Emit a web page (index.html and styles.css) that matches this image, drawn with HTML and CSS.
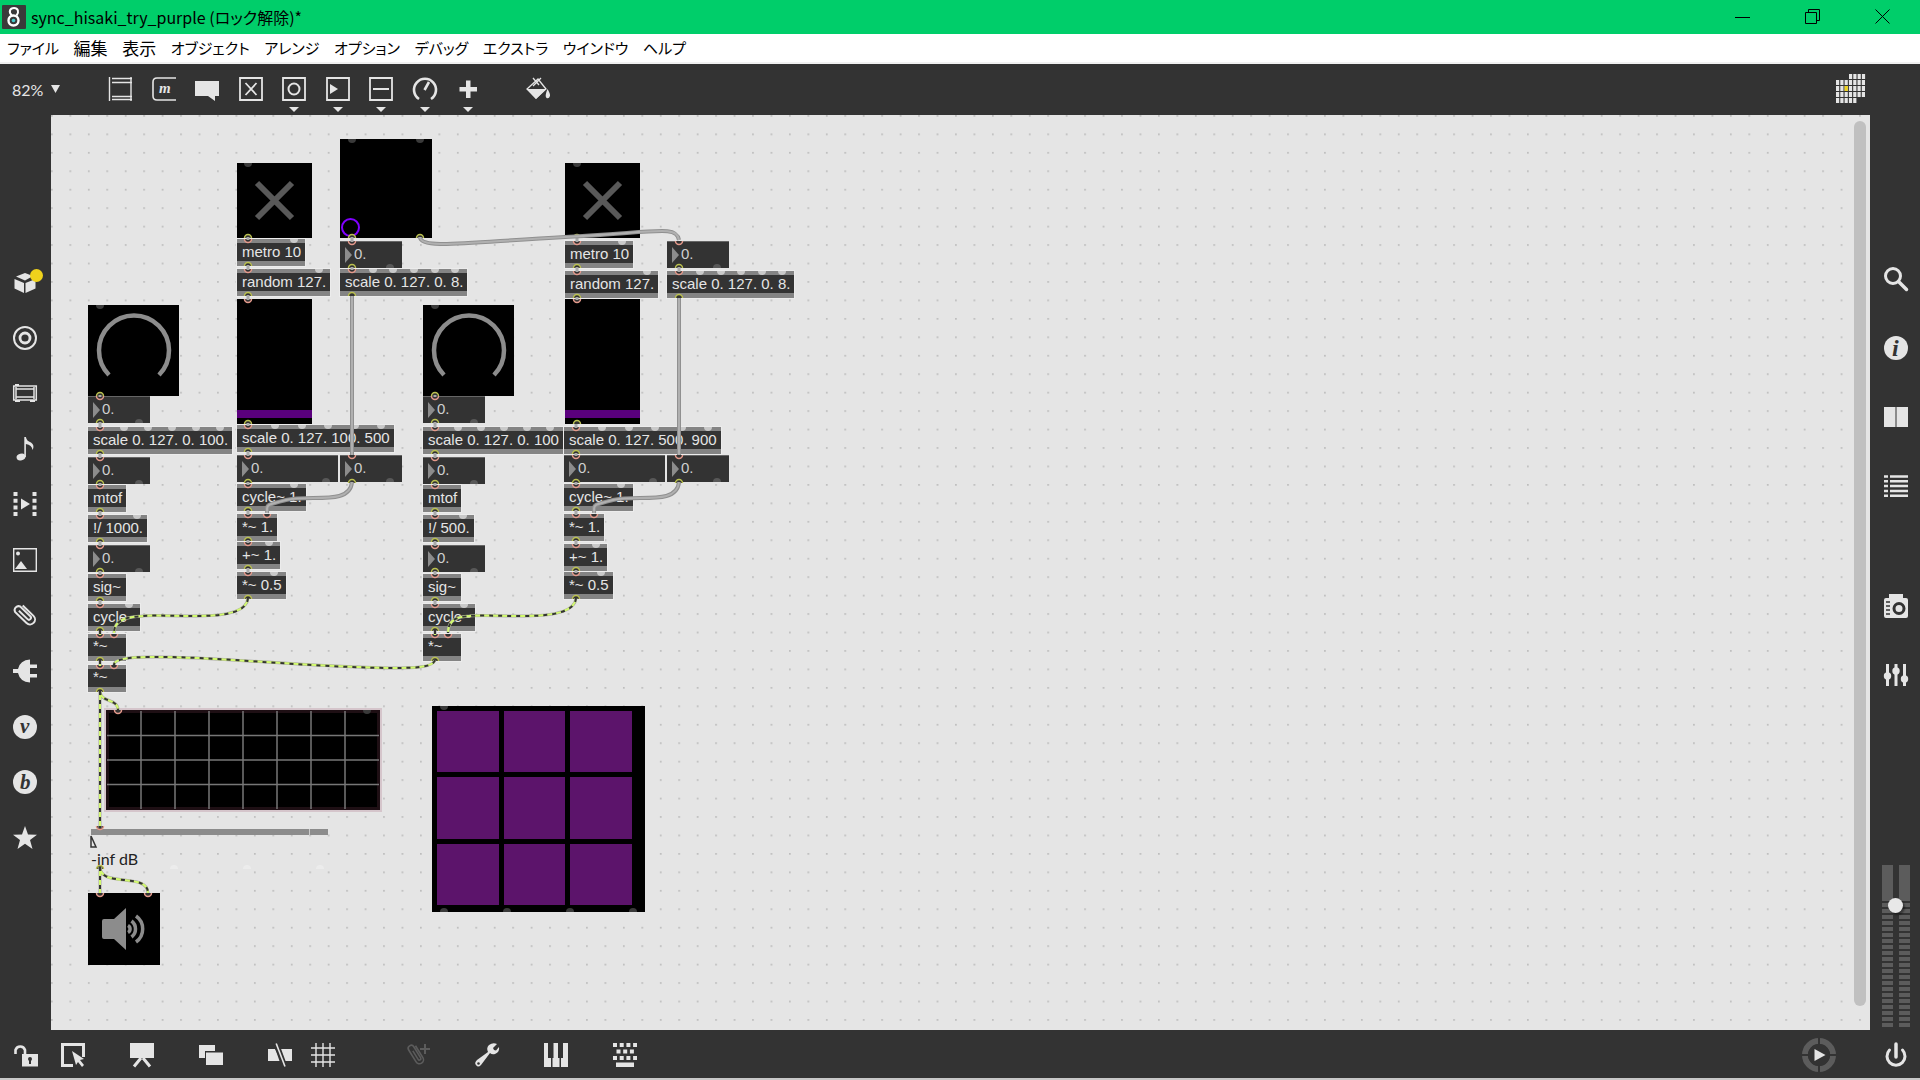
FILE: index.html
```html
<!DOCTYPE html>
<html lang="ja">
<head>
    <meta charset="UTF-8">
    <meta name="viewport" content="width=device-width, initial-scale=1.0">
    <title>sync_hisaki_try_purple</title>
    <link rel="stylesheet" href="styles.css">
</head>
<body>
    <!-- Title bar -->
    <header class="title-bar">
        <svg class="app-icon" viewBox="0 0 24 24"><rect width="24" height="24" rx="1" fill="#3a3a3a"/><circle cx="11.500" cy="15.500" r="5" fill="none" stroke="#fff" stroke-width="2.4"/><path d="M10 10.500C6 7 8 3 12 3C16 3 17.500 7 14.500 10.500" fill="none" stroke="#fff" stroke-width="2"/><circle cx="11.500" cy="15.500" r="1.800" fill="#4cc"/></svg>
        <h1 class="title">sync_hisaki_try_purple (ロック解除)*</h1>
        <div class="window-buttons">
            <button aria-label="Minimize"><svg viewBox="0 0 16 16"><path d="M0 8.500H15"/></svg></button>
            <button aria-label="Restore"><svg viewBox="0 0 16 16"><path d="M.5 3.500h11v11H.5zM3.500 3.500v-3h11v11h-3"/></svg></button>
            <button aria-label="Close"><svg viewBox="0 0 16 16"><path d="M.5 .5l14 14M14.500 .5l-14 14"/></svg></button>
        </div>
    </header>

    <nav class="menu-bar">
        <div class="menu-items">
            <button>ファイル</button>
            <button class="kanji">編集</button>
            <button class="kanji">表示</button>
            <button>オブジェクト</button>
            <button>アレンジ</button>
            <button>オプション</button>
            <button>デバッグ</button>
            <button>エクストラ</button>
            <button>ウインドウ</button>
            <button>ヘルプ</button>
        </div>
    </nav>

    <!-- Top toolbar -->
    <div class="toolbar">
        <button class="zoom-level">82% <svg viewBox="0 0 10 8"><path d="M0 0h9L4.500 8z"/></svg></button>
        <div class="tool-group">
            <button class="tool" aria-label="Object"><svg viewBox="0 0 24 24"><path d="M1.500 0V24M4 1.500H24M4 5.500H24M4 19.500H24M4 22.500H24M23 0V24" fill="none" stroke="currentColor" stroke-width="1.400"/></svg></button>
            <button class="tool" aria-label="Message"><svg viewBox="0 0 24 24"><path d="M24 1H5Q1 1 1 5V19Q1 23 5 23H24" fill="none" stroke="currentColor" stroke-width="1.600"/><text x="7" y="16" class="icon-letter" font-size="15">m</text></svg></button>
            <button class="tool" aria-label="Comment"><svg viewBox="0 0 24 24"><path d="M0 4H24V19H20V24L13 19H0z"/></svg></button>
            <button class="tool" aria-label="Toggle"><svg viewBox="0 0 24 24"><path d="M1 1H23V23H1zM6.500 6L17.500 18M17.500 6L6.500 18" fill="none" stroke="currentColor" stroke-width="1.800"/></svg></button>
            <button class="tool drop" aria-label="Button"><svg viewBox="0 0 24 24"><path d="M1 1H23V23H1z" fill="none" stroke="currentColor" stroke-width="1.800"/><circle cx="12" cy="12" r="5.500" fill="none" stroke="currentColor" stroke-width="2"/></svg></button>
            <button class="tool drop" aria-label="Number"><svg viewBox="0 0 24 24"><path d="M1 1H23V23H1z" fill="none" stroke="currentColor" stroke-width="1.800"/><path d="M4 7L12 12L4 17z"/></svg></button>
            <button class="tool drop" aria-label="Slider"><svg viewBox="0 0 24 24"><path d="M1 1H23V23H1zM4 12H20" fill="none" stroke="currentColor" stroke-width="1.800"/></svg></button>
            <button class="tool drop" aria-label="Dial"><svg viewBox="0 0 24 24"><path d="M6 22A11 11 0 1 1 18 22M11.500 13L16 5" fill="none" stroke="currentColor" stroke-width="2.600"/></svg></button>
            <button class="tool drop" aria-label="Add"><svg viewBox="0 0 24 24"><path d="M10 3.500h4.500V10H21v4.500h-6.500V21H10v-6.500H3.500V10H10z"/></svg></button>
        </div>
        <button class="tool paint" aria-label="Format"><svg viewBox="0 0 24 24"><path d="M12 2L20 12L10 21L1 12zM7 1L13 8M15 1L7 9" fill="none" stroke="currentColor" stroke-width="1.300"/><path d="M1 12H20L10 22z"/><path d="M21.500 12Q24.500 17 24 19Q23 22 20.500 21Q18.500 19 21.500 12"/></svg></button>
        <button class="tool-grid" aria-label="Toolbar options"><svg viewBox="0 0 30 30"><path d="M13 2.500H30M0 8.500H30M0 14.500H30M0 20.500H30M0 26.500H21" fill="none" stroke="#e5e5e5" stroke-width="5" stroke-dasharray="3.200 1.100"/><path d="M8.600 14.500h3.200" stroke="#efd21c" stroke-width="5"/></svg></button>
    </div>

    <main class="workspace">
        <!-- Left browser bar -->
        <aside class="side-left">
            <button class="icon" aria-label="Packages"><svg viewBox="0 0 24 24"><path d="M12 3L20 6L12 10.500L3 6.500zM1.500 9L11 13V23L1.500 18.500zM22.500 9L12.500 13V23L22.500 18.500z"/></svg><span class="badge"></span></button>
            <button class="icon" aria-label="Objects"><svg viewBox="0 0 24 24" fill="none" stroke="currentColor" stroke-width="2"><circle cx="12" cy="12" r="11"/><circle cx="12" cy="12" r="5" stroke-width="2.800"/></svg></button>
            <button class="icon" aria-label="Devices"><svg viewBox="0 0 24 24"><path d="M.7 5H23.300V19H.7zM2.500 8H21.500M2.500 16H21.500M3 6V18M21 6V18" fill="none" stroke="currentColor" stroke-width="1.500"/><path d="M2 3h4v2H2zM2 19h5v2H2zM17 19h5v2h-5z"/></svg></button>
            <button class="icon" aria-label="Audio"><svg viewBox="0 0 24 24"><ellipse cx="8" cy="20" rx="4.500" ry="3.400" transform="rotate(-15 8 20)"/><path d="M11.300 0h1.600Q13.500 4 18 5.500Q22 8 19.500 13Q19 8 12.900 7V20h-1.600z"/></svg></button>
            <button class="icon" aria-label="Video"><svg viewBox="0 0 24 24"><path d="M2.500 0V24M21.500 0V24" stroke="currentColor" stroke-width="4" stroke-dasharray="4 2.700"/><path d="M8 6.500L17 12L8 17.500z"/></svg></button>
            <button class="icon" aria-label="Images"><svg viewBox="0 0 24 24"><path d="M.7 .7H23.300V23.300H.7z" fill="none" stroke="currentColor" stroke-width="1.400"/><circle cx="5" cy="5.500" r="2"/><path d="M2 21L8 13L14 21z"/></svg></button>
            <button class="icon" aria-label="Snippets"><svg viewBox="0 0 24 24"><path d="M18 3V18A5 5 0 0 1 8 18V2A4 4 0 0 1 15.500 2V16A2 2 0 0 1 11.500 16V4" transform="rotate(-46 12 12)" fill="none" stroke="currentColor" stroke-width="2"/></svg></button>
            <button class="icon" aria-label="Plug-ins"><svg viewBox="0 0 24 24"><path d="M0 10H5Q7 1 17 .5V5.500H24V9H17V15H24V18.500H17V23.500Q7 23 5 14H0z"/></svg></button>
            <button class="icon" aria-label="Vizzie"><svg viewBox="0 0 24 24"><circle cx="12" cy="12" r="12"/><text x="7" y="18" class="icon-letter dark" font-size="21">v</text></svg></button>
            <button class="icon" aria-label="Beap"><svg viewBox="0 0 24 24"><circle cx="12" cy="12" r="12"/><text x="7" y="19" class="icon-letter dark" font-size="21">b</text></svg></button>
            <button class="icon" aria-label="Favorites"><svg viewBox="0 0 24 24"><path d="M12 0L15 8.500L24 8.700L17 14L19.500 23L12 17.800L4.500 23L7 14L0 8.700L9 8.500z"/></svg></button>
        </aside>

        <!-- Patcher canvas -->
        <section class="canvas">
            <svg class="dots">
                <defs>
                    <pattern id="dot-grid" width="15" height="15" patternUnits="userSpaceOnUse" patternTransform="scale(1.23)">
                        <rect width="1.4" height="1.4" fill="#bdbdbd"/>
                    </pattern>
                </defs>
                <rect width="100%" height="100%" fill="url(#dot-grid)"/>
            </svg>

            <div class="chain chain-a">
                <label class="dial n1"><svg viewBox="0 0 91 91"><path d="M21 70A35 35 0 1 1 71 70"/></svg><input type="range" value="0" max="127" aria-label="Dial 1"></label>
                <label class="number n2"><input type="text" value="0." aria-label="Dial value"></label>
                <div class="object n3">scale 0. 127. 0. 100.</div>
                <label class="number n4"><input type="text" value="0." aria-label="Scaled value"></label>
                <div class="object n5">mtof</div>
                <div class="object n6">!/ 1000.</div>
                <label class="number n7"><input type="text" value="0." aria-label="Divided value"></label>
                <div class="object n8">sig~</div>
                <div class="object n9">cycle~</div>
                <div class="object signal n10">*~</div>
                <div class="object signal n11">*~</div>
            </div>

            <div class="chain chain-d">
                <label class="dial n1"><svg viewBox="0 0 91 91"><path d="M21 70A35 35 0 1 1 71 70"/></svg><input type="range" value="0" max="127" aria-label="Dial 2"></label>
                <label class="number n2"><input type="text" value="0." aria-label="Dial value"></label>
                <div class="object n3">scale 0. 127. 0. 100</div>
                <label class="number n4"><input type="text" value="0." aria-label="Scaled value"></label>
                <div class="object n5">mtof</div>
                <div class="object n6">!/ 500.</div>
                <label class="number n7"><input type="text" value="0." aria-label="Divided value"></label>
                <div class="object n8">sig~</div>
                <div class="object n9">cycle~</div>
                <div class="object signal n10">*~</div>
            </div>

            <div class="chain chain-b">
                <label class="toggle n1"><input type="checkbox" aria-label="Metro 1"><svg viewBox="0 0 75 75"><path d="M20 20L55 55M55 20L20 55"/></svg></label>
                <div class="object n2">metro 10</div>
                <div class="object n3">random 127.</div>
                <label class="multislider n4"><input type="range" value="0" max="127" aria-label="Random 1"></label>
                <div class="object n5">scale 0. 127. 100. 500</div>
                <label class="number wide n6"><input type="text" value="0." aria-label="Frequency"></label>
                <div class="object n7">cycle~ 1.</div>
                <div class="object n8">*~ 1.</div>
                <div class="object n9">+~ 1.</div>
                <div class="object n10">*~ 0.5</div>
            </div>

            <div class="chain chain-c">
                <label class="xy-pad n1"><input type="range" value="0" max="127" aria-label="XY pad"></label>
                <label class="number n2"><input type="text" value="0." aria-label="X value"></label>
                <div class="object n3">scale 0. 127. 0. 8.</div>
                <label class="number n4"><input type="text" value="0." aria-label="Scaled X"></label>
            </div>

            <div class="chain chain-e-top">
                <label class="toggle n1"><input type="checkbox" aria-label="Metro 2"><svg viewBox="0 0 75 75"><path d="M20 20L55 55M55 20L20 55"/></svg></label>
                <div class="object n2">metro 10</div>
                <div class="object n3">random 127.</div>
                <label class="multislider n4"><input type="range" value="0" max="127" aria-label="Random 2"></label>
            </div>

            <div class="chain chain-e">
                <div class="object n5">scale 0. 127. 500. 900</div>
                <label class="number wide n6"><input type="text" value="0." aria-label="Frequency"></label>
                <div class="object n7">cycle~ 1.</div>
                <div class="object n8">*~ 1.</div>
                <div class="object n9">+~ 1.</div>
                <div class="object n10">*~ 0.5</div>
            </div>

            <div class="chain chain-f">
                <label class="number n2"><input type="text" value="0." aria-label="Y value"></label>
                <div class="object n3">scale 0. 127. 0. 8.</div>
                <label class="number n4"><input type="text" value="0." aria-label="Scaled Y"></label>
            </div>

            <!-- Scope, gain, output and pads -->
            <div class="scope"><svg viewBox="0 0 272 98" preserveAspectRatio="none"><path d="M34 0V98M68 0V98M102 0V98M136 0V98M170 0V98M204 0V98M238 0V98M0 24.500H272M0 49H272M0 73.500H272"/></svg></div>
            <label class="gain">
                <span class="gain-bar"></span>
                <input type="range" value="0" aria-label="Gain">
                <svg class="gain-handle" viewBox="0 0 8 13"><path d="M1 1L6 12H1z"/></svg>
                <span class="gain-text">-inf dB</span>
            </label>
            <button class="dac" aria-label="Audio on/off"><svg viewBox="0 0 44 42"><path d="M0 13Q0 11 2 11H12L24 0V42L12 31H2Q0 31 0 29z" fill="#8c8c8c"/><path d="M26 17.500A4 4 0 0 1 26 24.500M29.500 13A10 10 0 0 1 29.500 29M34 8A16 16 0 0 1 34 34" fill="none" stroke="#8c8c8c" stroke-width="3.500"/></svg></button>
            <div class="pads">
                <button aria-label="Pad 1"></button><button aria-label="Pad 2"></button><button aria-label="Pad 3"></button>
                <button aria-label="Pad 4"></button><button aria-label="Pad 5"></button><button aria-label="Pad 6"></button>
                <button aria-label="Pad 7"></button><button aria-label="Pad 8"></button><button aria-label="Pad 9"></button>
            </div>

            <!-- Ports and patch cords -->
            <svg class="cords">
                <defs>
                    <path id="top" d="M-4 0A4 4 0 0 0 4 0z"/>
                    <path id="bot" d="M-4 0A4 4 0 0 1 4 0z"/>
                    <path id="in" d="M-3.500 0A3.500 3.500 0 0 0 3.500 0" fill="#333" stroke="#e59a8c" stroke-width="1.500"/>
                    <path id="out" d="M-3.500 0A3.500 3.500 0 0 1 3.500 0" fill="#333" stroke="#bcc250" stroke-width="1.500"/>
                    <g id="signal-cords">
                        <path d="M100 630V635M100 660V666M435 630V635M100 691V828M100 867V893"/>
                        <path d="M248 598C247 612 226 616 198 616S150 615 143 616S114 616 114 633"/>
                        <path d="M576 598C575 612 553 616 525 616S477 615 470 616S448 616 448 633"/>
                        <path d="M435 660C433 668 412 668 390 668C300 667 215 656 150 657C130 657 114 659 114 665"/>
                        <path d="M100 691C100 703 118 698 118 710"/>
                        <path d="M100 867C100 888 148 872 148 893"/>
                    </g>
                    <g id="control-cords">
                        <path d="M420 237C420 250 470 242 565 237S676 225 679 240"/>
                        <path d="M352 296V455M679 298V455"/>
                        <path d="M352 482C350 506 310 494 286 500S268 505 267 513"/>
                        <path d="M679 482C677 506 637 494 613 500S595 505 594 513"/>
                    </g>
                </defs>
                <g transform="translate(-51 -115)">
                    <g fill="#c9c9c9">
                        <use href="#top" x="294" y="239"/><use href="#top" x="319" y="269"/>
                        <use href="#top" x="373" y="269"/><use href="#top" x="393" y="269"/><use href="#top" x="414" y="269"/><use href="#top" x="435" y="269"/><use href="#top" x="455" y="269"/>
                        <use href="#top" x="124" y="427"/><use href="#top" x="148" y="427"/><use href="#top" x="172" y="427"/><use href="#top" x="196" y="427"/><use href="#top" x="220" y="427"/>
                        <use href="#top" x="275" y="425"/><use href="#top" x="302" y="425"/><use href="#top" x="328" y="425"/><use href="#top" x="355" y="425"/><use href="#top" x="381" y="425"/>
                        <use href="#top" x="294" y="484"/><use href="#top" x="137" y="515"/><use href="#top" x="269" y="542"/><use href="#top" x="274" y="572"/><use href="#top" x="129" y="604"/>
                        <use href="#top" x="622" y="241"/><use href="#top" x="647" y="271"/>
                        <use href="#top" x="700" y="271"/><use href="#top" x="721" y="271"/><use href="#top" x="741" y="271"/><use href="#top" x="762" y="271"/><use href="#top" x="782" y="271"/>
                        <use href="#top" x="458" y="427"/><use href="#top" x="481" y="427"/><use href="#top" x="504" y="427"/><use href="#top" x="527" y="427"/><use href="#top" x="550" y="427"/>
                        <use href="#top" x="602" y="427"/><use href="#top" x="629" y="427"/><use href="#top" x="655" y="427"/><use href="#top" x="682" y="427"/><use href="#top" x="708" y="427"/>
                        <use href="#top" x="621" y="484"/><use href="#top" x="596" y="544"/><use href="#top" x="601" y="572"/><use href="#top" x="463" y="515"/><use href="#top" x="464" y="604"/>
                    </g>
                    <g fill="#3a3a3a">
                        <use href="#top" x="248" y="163"/><use href="#top" x="577" y="163"/><use href="#top" x="100" y="305"/><use href="#top" x="435" y="305"/>
                        <use href="#top" x="352" y="139"/><use href="#top" x="420" y="139"/><use href="#top" x="367" y="710"/><use href="#top" x="444" y="706"/>
                        <use href="#bot" x="444" y="912"/><use href="#bot" x="507" y="912"/><use href="#bot" x="570" y="912"/><use href="#bot" x="633" y="912"/>
                    </g>
                    <g fill="#585858">
                        <use href="#bot" x="139" y="423"/><use href="#bot" x="139" y="484"/><use href="#bot" x="139" y="572"/>
                        <use href="#bot" x="474" y="423"/><use href="#bot" x="474" y="484"/><use href="#bot" x="474" y="572"/>
                        <use href="#bot" x="326" y="482"/><use href="#bot" x="653" y="482"/><use href="#bot" x="390" y="482"/><use href="#bot" x="390" y="268"/><use href="#bot" x="717" y="482"/><use href="#bot" x="717" y="268"/>
                    </g>
                    <g fill="#ececec"><use href="#bot" x="174" y="869"/><use href="#bot" x="247" y="869"/><use href="#bot" x="320" y="869"/></g>

                    <use href="#in" x="100" y="396"/><use href="#in" x="100" y="427"/><use href="#in" x="100" y="457"/><use href="#in" x="100" y="485"/><use href="#in" x="100" y="515"/><use href="#in" x="100" y="545"/><use href="#in" x="100" y="574"/><use href="#in" x="100" y="604"/><use href="#in" x="100" y="634"/><use href="#in" x="100" y="665"/>
                    <use href="#out" x="100" y="396"/><use href="#out" x="100" y="423"/><use href="#out" x="100" y="454"/><use href="#out" x="100" y="484"/><use href="#out" x="100" y="512"/><use href="#out" x="100" y="542"/><use href="#out" x="100" y="572"/><use href="#out" x="100" y="601"/><use href="#out" x="100" y="631"/><use href="#out" x="100" y="661"/><use href="#out" x="100" y="692"/>
                    <use href="#in" x="435" y="396"/><use href="#in" x="435" y="427"/><use href="#in" x="435" y="457"/><use href="#in" x="435" y="485"/><use href="#in" x="435" y="515"/><use href="#in" x="435" y="545"/><use href="#in" x="435" y="574"/><use href="#in" x="435" y="604"/><use href="#in" x="435" y="634"/>
                    <use href="#out" x="435" y="396"/><use href="#out" x="435" y="423"/><use href="#out" x="435" y="454"/><use href="#out" x="435" y="484"/><use href="#out" x="435" y="512"/><use href="#out" x="435" y="542"/><use href="#out" x="435" y="572"/><use href="#out" x="435" y="601"/><use href="#out" x="435" y="631"/><use href="#out" x="435" y="661"/>
                    <use href="#in" x="248" y="239"/><use href="#in" x="248" y="269"/><use href="#in" x="248" y="299"/><use href="#in" x="248" y="425"/><use href="#in" x="248" y="455"/><use href="#in" x="248" y="484"/><use href="#in" x="248" y="514"/><use href="#in" x="248" y="542"/><use href="#in" x="248" y="572"/>
                    <use href="#out" x="248" y="238"/><use href="#out" x="248" y="266"/><use href="#out" x="248" y="296"/><use href="#out" x="248" y="424"/><use href="#out" x="248" y="452"/><use href="#out" x="248" y="483"/><use href="#out" x="248" y="511"/><use href="#out" x="248" y="541"/><use href="#out" x="248" y="569"/><use href="#out" x="248" y="599"/>
                    <use href="#in" x="577" y="241"/><use href="#in" x="577" y="271"/><use href="#in" x="577" y="299"/><use href="#in" x="576" y="427"/><use href="#in" x="576" y="455"/><use href="#in" x="576" y="484"/><use href="#in" x="576" y="514"/><use href="#in" x="576" y="544"/><use href="#in" x="576" y="572"/>
                    <use href="#out" x="577" y="238"/><use href="#out" x="577" y="268"/><use href="#out" x="577" y="298"/><use href="#out" x="577" y="424"/><use href="#out" x="576" y="454"/><use href="#out" x="576" y="483"/><use href="#out" x="576" y="511"/><use href="#out" x="576" y="541"/><use href="#out" x="576" y="571"/><use href="#out" x="576" y="599"/>
                    <use href="#in" x="352" y="241"/><use href="#in" x="352" y="269"/><use href="#in" x="352" y="455"/><use href="#in" x="679" y="241"/><use href="#in" x="679" y="271"/><use href="#in" x="679" y="455"/>
                    <use href="#out" x="352" y="238"/><use href="#out" x="352" y="268"/><use href="#out" x="352" y="296"/><use href="#out" x="352" y="483"/><use href="#out" x="420" y="238"/><use href="#out" x="679" y="268"/><use href="#out" x="679" y="298"/><use href="#out" x="679" y="483"/>
                    <use href="#in" x="267" y="514"/><use href="#in" x="594" y="514"/><use href="#in" x="114" y="634"/><use href="#in" x="448" y="634"/><use href="#in" x="114" y="665"/><use href="#in" x="118" y="710"/><use href="#in" x="100" y="826"/><use href="#in" x="100" y="893"/><use href="#in" x="148" y="893"/>
                    <use href="#out" x="100" y="869"/>

                    <path class="links" d="M100 395v2M100 422v6M100 453v5M100 483v3M100 511v5M100 541v5M100 571v4M100 600v5M435 395v2M435 422v6M435 453v5M435 483v3M435 511v5M435 541v5M435 571v4M435 600v5M248 237v3M248 265v5M248 295v5M248 423v3M248 451v5M248 482v3M248 510v5M248 540v3M248 568v5M577 237v5M577 267v5M577 297v3M576 424v4M576 453v3M576 482v3M576 510v5M576 540v5M576 570v3M352 237v5M352 267v3M679 267v5"/>
                    <use href="#control-cords" class="cord-edge"/>
                    <use href="#control-cords" class="cord-fill"/>
                    <use href="#signal-cords" class="cord-edge thin"/>
                    <use href="#signal-cords" class="cord-signal"/>
                    <use href="#signal-cords" class="cord-dash"/>
                </g>
            </svg>
            <div class="scrollbar"></div>
        </section>

        <!-- Right inspector bar -->
        <aside class="side-right">
            <div class="icon-stack">
                <button class="icon" aria-label="Search"><svg viewBox="0 0 24 24" fill="none" stroke="currentColor"><circle cx="9" cy="9" r="7.500" stroke-width="3"/><path d="M14.500 14.500L22.500 22.500" stroke-width="3.500" stroke-linecap="round"/></svg></button>
                <button class="icon" aria-label="Inspector"><svg viewBox="0 0 24 24"><circle cx="12" cy="12" r="12"/><text x="8" y="20" class="icon-letter dark" font-size="24">i</text></svg></button>
                <button class="icon" aria-label="Reference"><svg viewBox="0 0 24 24"><path d="M0 2H11V22H0zM13 2H24V22H13z"/><path d="M11 2h2v20h-2z" opacity=".5"/></svg></button>
                <button class="icon" aria-label="Console"><svg viewBox="0 0 24 24"><path d="M0 2.500H4M6 2.500H24M0 7.300H4M6 7.300H24M0 12.100H4M6 12.100H24M0 16.900H4M6 16.900H24M0 21.700H4M6 21.700H24" stroke="currentColor" stroke-width="2.500"/></svg></button>
            </div>
            <div class="icon-stack">
                <button class="icon" aria-label="Snapshots"><svg viewBox="0 0 24 24"><path d="M5 0H19V4H22Q24 4 24 6V22Q24 24 22 24H2Q0 24 0 22V6Q0 4 2 4H5z"/><circle cx="15" cy="14.500" r="5" fill="none" stroke="#333" stroke-width="3"/><path d="M2 8H6M2 12H6M2 16H6M2 20H6" stroke="#333" stroke-width="1.600"/></svg></button>
                <button class="icon" aria-label="Mixer"><svg viewBox="0 0 24 24"><path d="M2 1h3v22H2zM10.500 1h3v22h-3zM19 1h3v22h-3z"/><circle cx="3.500" cy="13" r="3.700"/><circle cx="12" cy="8" r="3.700"/><circle cx="20.500" cy="16" r="3.700"/></svg></button>
            </div>
            <label class="volume">
                <span class="meter"></span><span class="meter"></span><span class="knob"></span>
                <input type="range" value="75" aria-label="Volume">
            </label>
        </aside>
    </main>

    <!-- Bottom toolbar -->
    <footer class="bottom-bar">
        <div class="lock-group">
            <button class="icon" aria-label="Unlock"><svg viewBox="0 0 24 24"><path d="M8 11H24V23.500H8z"/><path d="M1.500 11V7A5 5 0 0 1 11 7V11" fill="none" stroke="currentColor" stroke-width="2.600"/><circle cx="16" cy="16" r="2" fill="#333"/><path d="M15 16h2v5h-2z" fill="#333"/></svg></button>
            <button class="icon" aria-label="Operate while unlocked"><svg viewBox="0 0 24 24"><path d="M22.500 14V1.500H1.500V22.500H12" fill="none" stroke="currentColor" stroke-width="3"/><path d="M11 8L23 16L19 17L23 22L21 24L17 19L15 22z"/></svg></button>
        </div>
        <button class="icon" aria-label="Presentation"><svg viewBox="0 0 24 24"><path d="M0 0H24V15H0z"/><path d="M11 15L4 23.500M13 15L20 23.500" stroke="currentColor" stroke-width="3"/></svg></button>
        <button class="icon" aria-label="Bring to front"><svg viewBox="0 0 24 24"><path d="M0 2H16V8H6V15H0z"/><path d="M7 9.500H24V22H7z"/></svg></button>
        <div class="snap-group">
            <button class="icon" aria-label="Disable cords"><svg viewBox="0 0 24 24"><path d="M0 6H7L13 18H0zM11 6H24V18H17z"/><path d="M7 .5L15 23.500M9.500 .5L18 23.500" stroke="#333" stroke-width="3"/><path d="M8.200 .5L17 23.500" stroke="currentColor" stroke-width="1.600"/></svg></button>
            <button class="icon" aria-label="Grid"><svg viewBox="0 0 24 24"><path d="M5 0V24M12 0V24M19 0V24M0 5H24M0 12H24M0 19H24" stroke="currentColor" stroke-width="1.400"/></svg></button>
        </div>
        <button class="icon add-snippet" aria-label="Add snippet"><svg viewBox="0 0 24 24"><path d="M15 4V18A4 4 0 0 1 7 18V4A3 3 0 0 1 13 4V17A1.500 1.500 0 0 1 10 17V7" transform="rotate(-32 10 13)" fill="none" stroke="currentColor" stroke-width="1.600"/><path d="M19 1V11M14 6H24" stroke="currentColor" stroke-width="2"/></svg></button>
        <button class="icon" aria-label="Debug"><svg viewBox="0 0 24 24"><path d="M22 1L18 5L19 7L21 7.500L24 4Q25 9 20 11Q17 12 15 10L6 22Q3 25 1 22Q-1 20 2 17L13 9Q11 5 14 2Q18-1 22 1z"/><circle cx="3.500" cy="20.500" r="1.300" fill="#333"/></svg></button>
        <button class="icon" aria-label="MIDI"><svg viewBox="0 0 24 24"><path d="M0 0H4V15H7V24H0zM8.500 24V15H9.500V0H14V15H15.500V24zM17 24V15H19V0H24V24z"/></svg></button>
        <button class="icon" aria-label="Key commands"><svg viewBox="0 0 24 24"><path d="M0 2H24M0 15H24" stroke="currentColor" stroke-width="4" stroke-dasharray="4 2.700"/><path d="M3.500 8.500H21" stroke="currentColor" stroke-width="4" stroke-dasharray="4 2.700"/><path d="M3 19.500H21V24H3z"/></svg></button>
        <div class="transport">
            <button class="play" aria-label="Play"><svg viewBox="0 0 34 34"><circle cx="17" cy="17" r="14" fill="none" stroke="#5c5c5c" stroke-width="6"/><path d="M17 0V34M0 17H34" stroke="#333" stroke-width="2"/><circle cx="17" cy="17" r="11" fill="#333"/><path d="M12.500 11L23.500 17L12.500 23z"/></svg></button>
            <button class="icon" aria-label="Audio power"><svg viewBox="0 0 24 24" fill="none" stroke="currentColor" stroke-width="3" stroke-linecap="round"><path d="M5.500 7A9 9 0 1 0 18.500 7"/><path d="M12 1V14" stroke-width="3.500"/></svg></button>
        </div>
    </footer>
</body>
</html>
```

FILE: styles.css
```css
/* General Styles */
* {
    box-sizing: border-box;
}

body {
    margin: 0;
    height: 100vh;
    display: flex;
    flex-direction: column;
    overflow: hidden;
    background: #333;
    color: #e5e5e5;
    font-family: "Lato", "Noto Sans CJK JP", sans-serif;
}

button {
    padding: 0;
    border: none;
    background: none;
    color: inherit;
    font: inherit;
    cursor: pointer;
}

svg {
    display: block;
    fill: currentColor;
    overflow: visible;
}

svg[fill="none"] {
    fill: none;
}

label input[type="range"] {
    position: absolute;
    inset: 0;
    width: 100%;
    height: 100%;
    margin: 0;
    opacity: 0;
}

/* Title bar */
.title-bar {
    display: flex;
    align-items: center;
    flex: 0 0 34px;
    padding: 0 2px;
    background: #00ce6a;
    color: #000;
}

.app-icon {
    width: 24px;
    height: 24px;
    margin-right: 5px;
}

.title {
    margin: 0;
    font: 400 16px/24px "Noto Sans CJK JP", sans-serif;
    font-feature-settings: "palt";
}

.window-buttons {
    display: flex;
    margin-left: auto;
}

.window-buttons button {
    width: 70px;
    height: 34px;
}

.window-buttons svg {
    width: 16px;
    height: 16px;
    margin: 0 auto;
    fill: none;
    stroke: #000;
}

/* Menu bar */
.menu-bar {
    flex: 0 0 30px;
    padding: 0 7px;
    background: #fff;
    border-bottom: 2px solid #f0f0f0;
    color: #000;
}

.menu-items {
    display: flex;
    justify-content: space-between;
    width: 679px;
}

.menu-items button {
    font: 400 15px/28px "Noto Sans CJK JP", sans-serif;
    font-feature-settings: "palt";
    white-space: nowrap;
}

.menu-items .kanji {
    font-size: 17px;
}

/* Top toolbar */
.toolbar {
    display: flex;
    align-items: center;
    flex: 0 0 51px;
    padding: 0 4px 1px 12px;
}

.zoom-level {
    display: flex;
    align-items: center;
    gap: 8px;
    width: 96px;
    font-size: 16px;
}

.zoom-level svg {
    width: 10px;
    height: 8px;
}

.tool-group {
    display: flex;
    justify-content: space-between;
    width: 372px;
}

.tool {
    position: relative;
    width: 24px;
    height: 24px;
}

.drop::after {
    content: "";
    position: absolute;
    left: 7px;
    top: 30px;
    border: 5px solid transparent;
    border-top-color: #e5e5e5;
    border-bottom: none;
}

.paint {
    margin-left: 46px;
}

.tool-grid {
    width: 30px;
    height: 30px;
    margin: 0 50px 0 auto;
}

.icon-letter {
    font-family: "Liberation Serif", serif;
    font-style: italic;
    font-weight: bold;
}

.icon-letter.dark {
    fill: #333;
}

/* Side bars */
.workspace {
    display: flex;
    flex: 1;
    min-height: 0;
}

.icon {
    position: relative;
    width: 24px;
    height: 24px;
    flex: none;
}

.side-left {
    display: flex;
    flex-direction: column;
    align-items: center;
    justify-content: space-between;
    width: 51px;
    padding: 155px 1px 180px 0;
}

.badge {
    position: absolute;
    right: -6px;
    top: -1px;
    width: 13px;
    height: 13px;
    border-radius: 50%;
    background: #efd21c;
}

.side-right {
    display: flex;
    flex-direction: column;
    align-items: center;
    gap: 96px;
    width: 50px;
    padding: 152px 0 3px 2px;
}

.icon-stack {
    display: flex;
    flex-direction: column;
    gap: 45px;
}

.volume {
    position: relative;
    display: flex;
    gap: 6px;
    margin-top: auto;
}

.meter {
    width: 11px;
    height: 162px;
    background: linear-gradient(#5c5c5c 36px, transparent 36px), repeating-linear-gradient(#333 0 2px, #5c5c5c 2px 6px);
}

.knob {
    position: absolute;
    left: 6px;
    top: 33px;
    width: 15px;
    height: 15px;
    border-radius: 50%;
    background: #e8e8e8;
    box-shadow: 2px 2px 2px rgba(0, 0, 0, 0.4);
}

/* Patcher canvas */
.canvas {
    position: relative;
    flex: 1;
    overflow: hidden;
    background: #e5e5e5;
}

.dots,
.cords {
    position: absolute;
    left: 0;
    top: 0;
    width: 100%;
    height: 100%;
}

.cords {
    pointer-events: none;
}

.scrollbar {
    position: absolute;
    right: 4px;
    top: 6px;
    bottom: 24px;
    width: 12px;
    border-radius: 6px;
    background: #c0c0c0;
}

/* Patcher objects */
.chain {
    position: absolute;
    top: 0;
}

.chain > * {
    position: absolute;
    left: 0;
}

.object {
    min-width: 38px;
    height: 27px;
    padding: 0 4px 0 5px;
    border-top: 4px solid #848484;
    border-bottom: 5px solid #848484;
    background: #333;
    box-shadow: 0 0 0 1px #ececec;
    color: #e5e5e5;
    font: 15px/18px "Liberation Sans", sans-serif;
    white-space: nowrap;
}

.signal {
    line-height: 16px;
}

.number {
    width: 62px;
    height: 27px;
    padding-left: 14px;
    border-top: 1px solid #666;
    background: #333;
}

.number::before {
    content: "";
    position: absolute;
    left: 5px;
    top: 5px;
    border: 8px solid transparent;
    border-left: 7px solid #8c8c8c;
    border-right: none;
}

.number input {
    display: block;
    width: 100%;
    height: 24px;
    padding: 0;
    border: none;
    outline: none;
    background: none;
    color: #d0d0d0;
    font: 15px/24px "Liberation Sans", sans-serif;
}

.wide {
    width: 101px;
}

.dial {
    width: 91px;
    height: 91px;
    background: #000;
}

.dial path {
    fill: none;
    stroke: #8c8c8c;
    stroke-width: 4.5;
}

.toggle {
    width: 75px;
    height: 75px;
    background: #000;
}

.toggle input {
    position: absolute;
    inset: 0;
    width: 100%;
    height: 100%;
    margin: 0;
    opacity: 0;
}

.toggle path {
    stroke: #595959;
    stroke-width: 6;
}

.multislider {
    width: 75px;
    height: 125px;
    background: linear-gradient(#5a007d, #5a007d) 0 111px / 100% 8px no-repeat #000;
}

.xy-pad {
    width: 92px;
    height: 99px;
    background: #000;
}

.xy-pad::before {
    content: "";
    position: absolute;
    left: 1px;
    bottom: 1px;
    width: 15px;
    height: 15px;
    border: 2px solid #8000ff;
    border-radius: 50%;
}

/* Object places on the canvas */
.chain-a { left: 37px; }
.chain-b { left: 186px; }
.chain-c { left: 289px; }
.chain-d { left: 372px; }
.chain-e { left: 513px; }
.chain-e-top { left: 514px; }
.chain-f { left: 616px; }

.chain-a .n1, .chain-d .n1 { top: 190px; }
.chain-a .n2, .chain-d .n2 { top: 281px; }
.chain-a .n3, .chain-d .n3 { top: 312px; }
.chain-a .n4, .chain-d .n4 { top: 342px; }
.chain-a .n5, .chain-d .n5 { top: 370px; }
.chain-a .n6, .chain-d .n6 { top: 400px; }
.chain-a .n7, .chain-d .n7 { top: 430px; }
.chain-a .n8, .chain-d .n8 { top: 459px; }
.chain-a .n9, .chain-d .n9 { top: 489px; }
.chain-a .n10, .chain-d .n10 { top: 519px; }
.chain-a .n11 { top: 550px; }

.chain-b .n1, .chain-e-top .n1 { top: 48px; }
.chain-b .n2 { top: 124px; }
.chain-b .n3 { top: 154px; }
.chain-b .n4, .chain-e-top .n4 { top: 184px; }
.chain-b .n5 { top: 310px; }
.chain-b .n6, .chain-e .n6 { top: 340px; }
.chain-b .n7, .chain-e .n7 { top: 369px; }
.chain-b .n8, .chain-e .n8 { top: 399px; }
.chain-b .n9 { top: 427px; }
.chain-b .n10, .chain-e .n10 { top: 457px; }
.chain-e-top .n2 { top: 126px; }
.chain-e-top .n3 { top: 156px; }
.chain-e .n5 { top: 312px; }
.chain-e .n9 { top: 429px; }

.chain-c .n1 { top: 24px; }
.chain-c .n2, .chain-f .n2 { top: 126px; }
.chain-c .n3 { top: 154px; }
.chain-f .n3 { top: 156px; }
.chain-c .n4, .chain-f .n4 { top: 340px; }

/* Scope */
.scope {
    position: absolute;
    left: 53px;
    top: 593px;
    width: 278px;
    height: 104px;
    padding: 1px;
    border: 2px solid #d5c5cb;
    background: #000;
    box-shadow: inset 0 0 0 3px #1e0f14;
}

.scope svg {
    width: 100%;
    height: 100%;
}

.scope path {
    fill: none;
    stroke: #777;
    stroke-width: 1.5;
}

/* Gain slider */
.gain {
    position: absolute;
    left: 39px;
    top: 714px;
    width: 240px;
    color: #222;
}

.gain-bar {
    display: block;
    height: 6px;
    margin-left: 1px;
    width: 237px;
    background: linear-gradient(90deg, #8c8c8c 218px, #ccc 218px 219px, #8c8c8c 219px);
}

.gain-handle {
    width: 8px;
    height: 13px;
}

.gain-handle path {
    fill: #e5e5e5;
    stroke: #333;
    stroke-width: 1.5;
}

.gain-text {
    display: block;
    padding: 1px;
    font-size: 16px;
    line-height: 20px;
}

/* Output button */
.dac {
    position: absolute;
    left: 37px;
    top: 778px;
    width: 72px;
    height: 72px;
    padding: 0 14px;
    background: #000;
}

/* Pads */
.pads {
    position: absolute;
    left: 381px;
    top: 591px;
    display: grid;
    grid-template-columns: repeat(3, 1fr);
    gap: 5px;
    width: 213px;
    height: 206px;
    padding: 5px 13px 7px 5px;
    background: #000;
}

.pads button {
    background: #5c146b;
}

/* Patch cords */
.links {
    stroke: #aaa;
    stroke-width: 3;
}

.cord-edge,
.cord-fill,
.cord-signal,
.cord-dash {
    fill: none;
}

.cord-edge {
    stroke: #909090;
    stroke-width: 4;
}

.cord-edge.thin {
    stroke: #a8a8a0;
    stroke-width: 3;
}

.cord-fill {
    stroke: #b0b0b0;
    stroke-width: 2;
}

.cord-signal {
    stroke: #d2fa6e;
    stroke-width: 2;
}

.cord-dash {
    stroke: #333;
    stroke-width: 2;
    stroke-dasharray: 4 5;
}

/* Bottom toolbar */
.bottom-bar {
    display: flex;
    align-items: center;
    gap: 45px;
    flex: 0 0 50px;
    padding: 2px 12px 0 14px;
    border-bottom: 2px solid #c8c8c8;
}

.lock-group {
    display: flex;
    gap: 23px;
}

.snap-group {
    display: flex;
    gap: 19px;
}

.add-snippet {
    margin-left: 26px;
    color: #5c5c5c;
}

.transport {
    display: flex;
    align-items: center;
    gap: 48px;
    margin-left: auto;
}

.play {
    width: 34px;
    height: 34px;
}
```
